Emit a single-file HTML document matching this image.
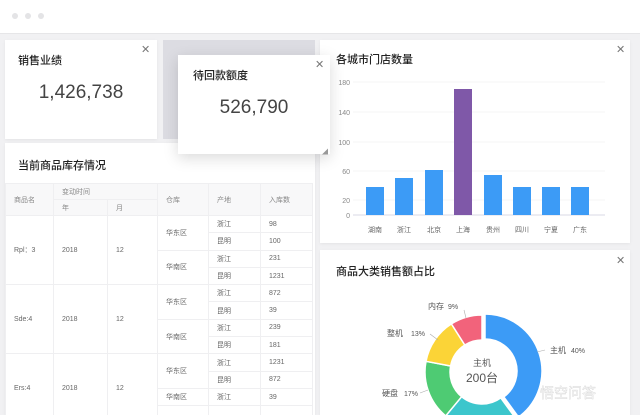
<!DOCTYPE html>
<html><head><meta charset="utf-8"><style>
*{margin:0;padding:0;box-sizing:border-box}
html,body{width:640px;height:415px;overflow:hidden}
body{background:#f1f1f3;font-family:"Liberation Sans","Noto Sans CJK SC",sans-serif;position:relative;color:#333}
.a{position:absolute}
.card{position:absolute;background:#fff;box-shadow:0 1px 3px rgba(0,0,0,.06)}
.t{position:absolute;font-size:11px;color:#222;font-weight:500}
.x{position:absolute;font-size:11px;color:#777;line-height:1}
table{border-collapse:collapse;position:absolute;left:5px;top:183px;width:308px;font-size:7px;color:#666}
td{border:1px solid #efeff1;padding-left:8px;height:17.3px;vertical-align:middle}
.h td{background:#f8f8f9;color:#888;height:16px}
.z{z-index:5}
</style></head><body>
<div class="a" style="left:0;top:0;width:640px;height:34px;background:#fff;border-bottom:1px solid #e6e6e8"></div>
<div class="a" style="left:12px;top:13px;width:6px;height:6px;border-radius:3px;background:#e4e4e6"></div>
<div class="a" style="left:25px;top:13px;width:6px;height:6px;border-radius:3px;background:#e4e4e6"></div>
<div class="a" style="left:38px;top:13px;width:6px;height:6px;border-radius:3px;background:#e4e4e6"></div>

<div class="card" style="left:5px;top:40px;width:152px;height:99px"></div>
<div class="t" style="left:18px;top:52px">销售业绩</div>
<div class="x" style="left:141px;top:45px">✕</div>
<div class="a" style="left:5px;top:82px;width:152px;text-align:center;font-size:19px;color:#444">1,426,738</div>

<div class="a" style="left:163px;top:40px;width:152px;height:99px;background:#dcdce2"></div>

<div class="card" style="left:5px;top:143px;width:310px;height:272px"></div>
<div class="t" style="left:18px;top:157px;font-size:11px">当前商品库存情况</div>
<table>
<tr class="h"><td rowspan="2" style="width:48px">商品名</td><td colspan="2" style="height:16px">变动时间</td><td rowspan="2" style="width:51px">仓库</td><td rowspan="2" style="width:52px">产地</td><td rowspan="2">入库数</td></tr>
<tr class="h"><td style="width:54px">年</td><td style="width:50px">月</td></tr>
<tr><td rowspan="4">Rpl：3</td><td rowspan="4">2018</td><td rowspan="4">12</td><td rowspan="2">华东区</td><td>浙江</td><td>98</td></tr>
<tr><td>昆明</td><td>100</td></tr>
<tr><td rowspan="2">华南区</td><td>浙江</td><td>231</td></tr>
<tr><td>昆明</td><td>1231</td></tr>
<tr><td rowspan="4">Sde:4</td><td rowspan="4">2018</td><td rowspan="4">12</td><td rowspan="2">华东区</td><td>浙江</td><td>872</td></tr>
<tr><td>昆明</td><td>39</td></tr>
<tr><td rowspan="2">华南区</td><td>浙江</td><td>239</td></tr>
<tr><td>昆明</td><td>181</td></tr>
<tr><td rowspan="4">Ers:4</td><td rowspan="4">2018</td><td rowspan="4">12</td><td rowspan="2">华东区</td><td>浙江</td><td>1231</td></tr>
<tr><td>昆明</td><td>872</td></tr>
<tr><td>华南区</td><td>浙江</td><td>39</td></tr>
<tr><td></td><td></td><td></td></tr>
</table>

<div class="card" style="left:320px;top:40px;width:310px;height:203px"></div>
<div class="t" style="left:336px;top:51px">各城市门店数量</div>
<div class="x" style="left:616px;top:45px">✕</div>
<svg class="a" style="left:320px;top:40px" width="310" height="203" font-size="7" fill="#888" font-family="Liberation Sans,Noto Sans CJK SC,sans-serif">
<g stroke="#f0f0f2" stroke-width="0.7"><line x1="33" y1="42" x2="285" y2="42"/><line x1="33" y1="72" x2="285" y2="72"/><line x1="33" y1="102" x2="285" y2="102"/><line x1="33" y1="131" x2="285" y2="131"/><line x1="33" y1="160" x2="285" y2="160"/></g>
<line x1="33" y1="175" x2="285" y2="175" stroke="#ccd" stroke-width="0.8"/>
<g text-anchor="end"><text x="30" y="45">180</text><text x="30" y="75">140</text><text x="30" y="105">100</text><text x="30" y="134">60</text><text x="30" y="163">20</text><text x="30" y="178">0</text></g>
<g fill="#3c9bf6"><rect x="46" y="147" width="18" height="28"/><rect x="75" y="138" width="18" height="37"/><rect x="105" y="130" width="18" height="45"/><rect x="164" y="135" width="18" height="40"/><rect x="193" y="147" width="18" height="28"/><rect x="222" y="147" width="18" height="28"/><rect x="251" y="147" width="18" height="28"/></g>
<rect x="134" y="49" width="18" height="126" fill="#7f58a8"/>
<g text-anchor="middle" fill="#666"><text x="55" y="192">湖南</text><text x="84" y="192">浙江</text><text x="114" y="192">北京</text><text x="143" y="192">上海</text><text x="173" y="192">贵州</text><text x="202" y="192">四川</text><text x="231" y="192">宁夏</text><text x="260" y="192">广东</text></g>
</svg>

<div class="card z" style="left:178px;top:55px;width:152px;height:99px;box-shadow:0 4px 14px rgba(0,0,0,.15)"></div>
<div class="t z" style="left:193px;top:67px">待回款额度</div>
<div class="x z" style="left:315px;top:60px">✕</div>
<div class="a z" style="left:178px;top:97px;width:152px;text-align:center;font-size:19px;color:#444">526,790</div>
<div class="a z" style="left:322px;top:147px;font-size:6px;color:#999">◢</div>

<div class="card" style="left:320px;top:250px;width:310px;height:165px"></div>
<div class="t" style="left:336px;top:263px">商品大类销售额占比</div>
<div class="x" style="left:616px;top:256px">✕</div>
<svg class="a" style="left:0;top:0" width="640" height="415" font-family="Liberation Sans,Noto Sans CJK SC,sans-serif">
<g stroke="#fff" stroke-width="1.5">
<path transform="translate(3,-1)" d="M482 315 A57 57 0 0 1 515.5 418.1 L500.8 397.9 A32 32 0 0 0 482 340Z" fill="#3c9bf6"/>
<path d="M515.5 418.1 A57 57 0 0 1 445.7 415.9 L461.6 396.7 A32 32 0 0 0 500.8 397.9Z" fill="#3cc6cc"/>
<path d="M445.7 415.9 A57 57 0 0 1 426 361.3 L450.6 366 A32 32 0 0 0 461.6 396.7Z" fill="#4ecb73"/>
<path d="M426 361.3 A57 57 0 0 1 451.4 323.9 L464.8 345 A32 32 0 0 0 450.6 366Z" fill="#fbd437"/>
<path d="M451.4 323.9 A57 57 0 0 1 482 315 L482 340 A32 32 0 0 0 464.8 345Z" fill="#f2637b"/>
</g>
<g fill="none" stroke="#aaa" stroke-width="0.6"><path d="M464 310 L466 318"/><path d="M430 334 L438 340"/><path d="M537 352 L545 350"/><path d="M428 390 L420 393"/></g>
<g font-size="8" fill="#555"><text x="428" y="309">内存</text><text x="448" y="309" font-size="7">9%</text>
<text x="387" y="336">整机</text><text x="411" y="336" font-size="7">13%</text>
<text x="550" y="353">主机</text><text x="571" y="353" font-size="7">40%</text>
<text x="382" y="396">硬盘</text><text x="404" y="396" font-size="7">17%</text></g>
<text x="482" y="366" text-anchor="middle" font-size="9" fill="#555">主机</text>
<text x="482" y="382" text-anchor="middle" font-size="12" fill="#555">200台</text>
<text x="540" y="398" font-size="14" fill="#fff" opacity="0.85" stroke="#ccc" stroke-width="0.4">悟空问答</text>
</svg>
</body></html>
